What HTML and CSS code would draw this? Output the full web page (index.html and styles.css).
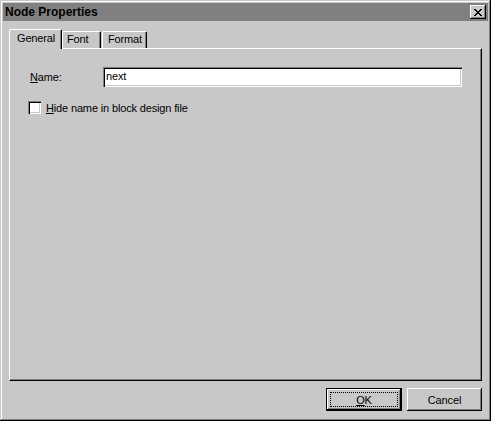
FILE: index.html
```html
<!DOCTYPE html>
<html>
<head>
<meta charset="utf-8">
<link rel="stylesheet" href="styles.css">
</head>
<body>
<div class="window">
  <div class="titlebar">
    <span class="title">Node Properties</span>
    <span class="close">
      <svg width="8" height="7" viewBox="0 0 8 7" shape-rendering="crispEdges">
        <path d="M0 0h2v1h-2zM6 0h2v1h-2zM1 1h2v1h-2zM5 1h2v1h-2zM2 2h4v1h-4zM3 3h2v1h-2zM2 4h4v1h-4zM1 5h2v1h-2zM5 5h2v1h-2zM0 6h2v1h-2zM6 6h2v1h-2z" fill="#000"/>
      </svg>
    </span>
  </div>
  <div class="content">
    <div class="tabs">
      <div class="tab active">General</div>
      <div class="tab tab-font">Font</div>
      <div class="tab tab-format">Format</div>
    </div>
    <div class="panel">
      <div class="name-row">
        <span class="lbl"><u>N</u>ame:</span>
        <div class="input">next</div>
      </div>
      <div class="check-row">
        <span class="checkbox"></span>
        <span class="check-label"><u>H</u>ide name in block design file</span>
      </div>
    </div>
    <div class="footer">
      <div class="btn default"><span class="focus"><u>O</u>K</span></div>
      <div class="btn">Cancel</div>
    </div>
  </div>
</div>
</body>
</html>
```
FILE: styles.css
```css
html, body {
  margin: 0;
  padding: 0;
  background: #c8c8c8;
}
body {
  font-family: "Liberation Sans", Arial, sans-serif;
  font-size: 11px;
  letter-spacing: -0.15px;
  color: #000;
}
.window {
  width: 491px;
  height: 421px;
  box-sizing: border-box;
  padding: 3px;
  background: #c8c8c8;
  display: flex;
  flex-direction: column;
  box-shadow: inset -1px -1px #000, inset 1px 1px #c8c8c8, inset -2px -2px #808080, inset 2px 2px #fff;
}
.titlebar {
  height: 18px;
  background: #808080;
  display: flex;
  align-items: center;
  justify-content: space-between;
  padding-left: 2px;
  padding-right: 2px;
}
.title {
  font-weight: bold;
  font-size: 12px;
  letter-spacing: 0;
  line-height: 18px;
  color: #000;
}
.close {
  width: 16px;
  height: 14px;
  box-sizing: border-box;
  background: #c8c8c8;
  display: flex;
  align-items: center;
  justify-content: center;
  padding-right: 1px;
  box-shadow: inset -1px -1px #000, inset 1px 1px #fff, inset -2px -2px #808080;
}
.content {
  flex: 1;
  display: flex;
  flex-direction: column;
  padding: 8px 6px 7px 6px;
}
.tabs {
  height: 19px;
  display: flex;
  align-items: flex-end;
  position: relative;
  z-index: 1;
}
.tab {
  box-sizing: border-box;
  height: 17px;
  border-top: 1px solid #fff;
  border-left: 1px solid #fff;
  border-right: 1px solid #000;
  border-radius: 2px 2px 0 0;
  box-shadow: inset -1px 0 #808080;
  line-height: 15px;
  background: #c8c8c8;
}
.tab.active {
  height: 20px;
  width: 53px;
  margin-bottom: -1px;
  line-height: 17px;
  padding-left: 7px;
}
.tab-font {
  width: 39px;
  padding-left: 4px;
}
.tab-format {
  width: 45px;
  margin-left: 1px;
  padding-left: 5px;
}
.panel {
  flex: 1;
  box-sizing: border-box;
  border-top: 1px solid #fff;
  border-left: 1px solid #fff;
  border-right: 1px solid #000;
  border-bottom: 1px solid #000;
  box-shadow: inset -1px -1px #808080;
  padding: 18px 0 0 18px;
  display: flex;
  flex-direction: column;
}
.name-row {
  display: flex;
  align-items: center;
  height: 20px;
}
.lbl {
  width: 75px;
  padding-left: 2px;
  box-sizing: border-box;
}
.input {
  width: 359px;
  height: 20px;
  box-sizing: border-box;
  background: #fff;
  padding: 2px 0 0 3px;
  line-height: 15px;
  box-shadow: inset 1px 1px #808080, inset 2px 2px #000, inset -1px -1px #fff, inset -2px -2px #c8c8c8;
}
.check-row {
  display: flex;
  align-items: center;
  margin-top: 14px;
  height: 13px;
}
.checkbox {
  width: 13px;
  height: 13px;
  box-sizing: border-box;
  background: #fff;
  box-shadow: inset 1px 1px #808080, inset 2px 2px #000, inset -1px -1px #fff, inset -2px -2px #c8c8c8;
}
.check-label {
  margin-left: 5px;
}
.footer {
  display: flex;
  justify-content: flex-end;
  margin-top: 7px;
  gap: 5px;
}
.btn {
  width: 75px;
  height: 23px;
  box-sizing: border-box;
  display: flex;
  align-items: center;
  justify-content: center;
  box-shadow: inset -1px -1px #000, inset 1px 1px #fff, inset -2px -2px #808080;
}
.btn.default {
  width: 76px;
  border: 1px solid #000;
  padding: 3px;
}
.focus {
  flex: 1;
  align-self: stretch;
  border: 1px dotted #000;
  display: flex;
  align-items: center;
  justify-content: center;
}
```
